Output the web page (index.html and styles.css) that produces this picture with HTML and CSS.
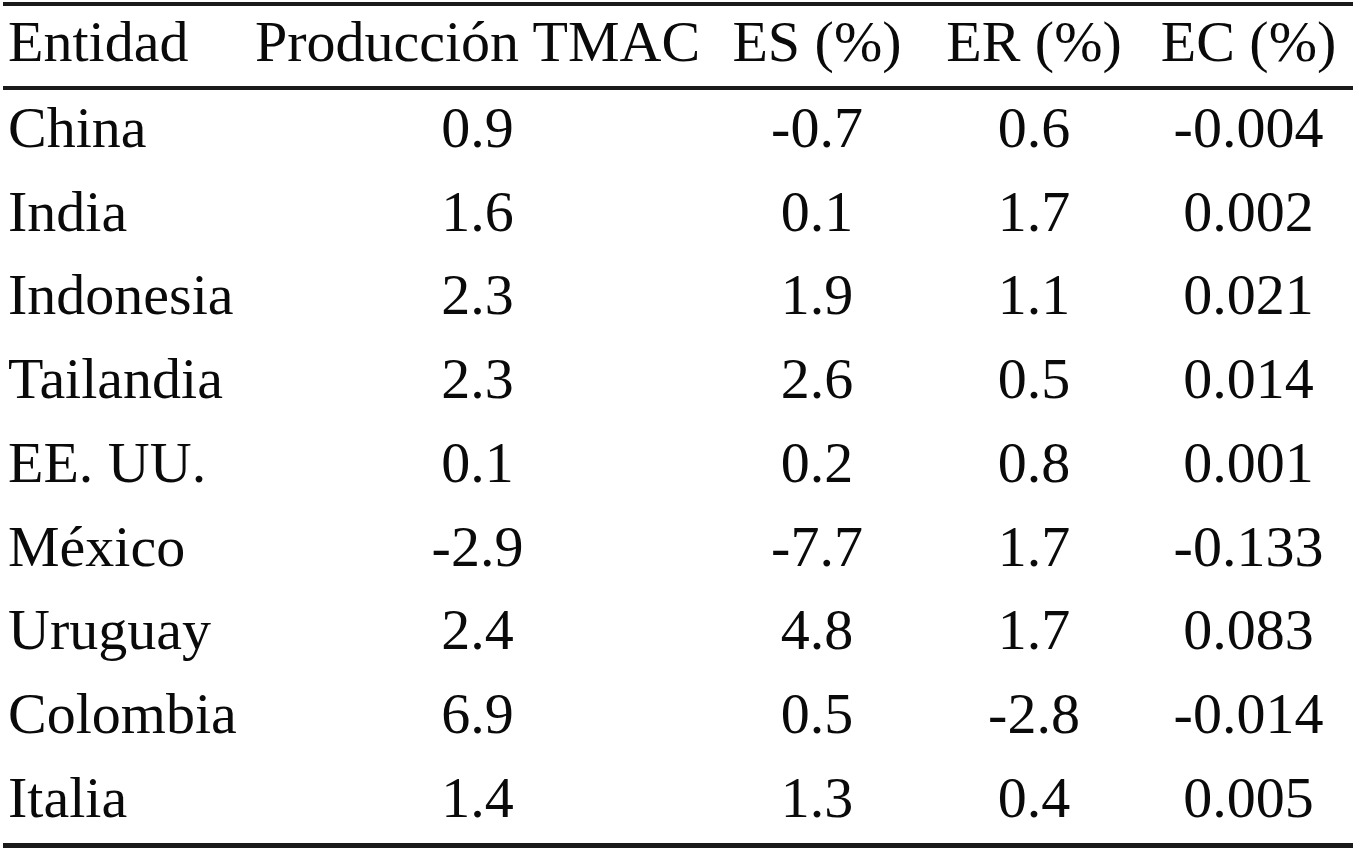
FILE: index.html
```html
<!DOCTYPE html>
<html lang="es">
<head>
<meta charset="utf-8">
<title>Tabla</title>
<link rel="stylesheet" href="styles.css">
</head>
<body>
<table class="data">
  <colgroup>
    <col class="c1"><col class="c2"><col class="c3"><col class="c4"><col class="c5">
  </colgroup>
  <thead>
    <tr><th class="name">Entidad</th><th>Producción TMAC</th><th>ES (%)</th><th>ER (%)</th><th>EC (%)</th></tr>
  </thead>
  <tbody>
    <tr><td class="name">China</td><td>0.9</td><td>-0.7</td><td>0.6</td><td>-0.004</td></tr>
    <tr><td class="name">India</td><td>1.6</td><td>0.1</td><td>1.7</td><td>0.002</td></tr>
    <tr><td class="name">Indonesia</td><td>2.3</td><td>1.9</td><td>1.1</td><td>0.021</td></tr>
    <tr><td class="name">Tailandia</td><td>2.3</td><td>2.6</td><td>0.5</td><td>0.014</td></tr>
    <tr><td class="name">EE. UU.</td><td>0.1</td><td>0.2</td><td>0.8</td><td>0.001</td></tr>
    <tr><td class="name">México</td><td>-2.9</td><td>-7.7</td><td>1.7</td><td>-0.133</td></tr>
    <tr><td class="name">Uruguay</td><td>2.4</td><td>4.8</td><td>1.7</td><td>0.083</td></tr>
    <tr><td class="name">Colombia</td><td>6.9</td><td>0.5</td><td>-2.8</td><td>-0.014</td></tr>
    <tr><td class="name">Italia</td><td>1.4</td><td>1.3</td><td>0.4</td><td>0.005</td></tr>
  </tbody>
</table>
</body>
</html>
```
FILE: styles.css
```css
html, body {
  margin: 0;
  padding: 0;
  background: #ffffff;
  overflow: hidden;
}

body {
  font-family: "Liberation Serif", "Times New Roman", serif;
  color: #0a0a0a;
  font-size: 58px;
}

.data {
  margin: 2px 0 0 3px;
  width: 1350px;
  table-layout: fixed;
  border-collapse: collapse;
  border-top: 4px solid #1a1a1a;
  border-bottom: 5px solid #1a1a1a;
}

.c1 { width: 242px; }
.c2 { width: 465px; }
.c3 { width: 214px; }
.c4 { width: 220px; }
.c5 { width: 209px; }

.data th,
.data td {
  padding: 0 0 8px 0;
  text-align: center;
  font-weight: normal;
  white-space: nowrap;
}

.data th {
  line-height: 72px;
  border-bottom: 4px solid #1a1a1a;
}

.data td {
  line-height: 75.7px;
}

.data .name {
  text-align: left;
  padding-left: 5px;
}
```
